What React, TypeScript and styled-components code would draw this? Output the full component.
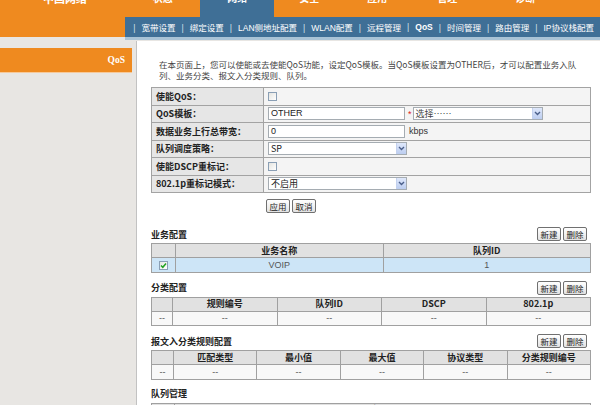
import styled, { createGlobalStyle } from "styled-components";

const ORANGE = "#ef8a1f";
const BLUE = "#3f6f96";
const CELL_BORDER = "#a3a3a3";

const GlobalStyle = createGlobalStyle`
  html, body {
    margin: 0;
    padding: 0;
  }
  body {
    background: #e8e6e3;
    font-family: "Liberation Sans", "Noto Sans CJK SC", sans-serif;
    font-size: 9px;
    color: #333;
  }
`;

const Header = styled.div`
  display: flex;
  align-items: flex-start;
`;

const Brand = styled.div`
  width: 138px;
  height: 37px;
  background: ${ORANGE};
  overflow: hidden;
`;

const BrandText = styled.div`
  margin: -8px 0 0 43px;
  font-family: "Noto Sans CJK SC", sans-serif;
  font-size: 11px;
  font-weight: 700;
  line-height: 12px;
  color: #fff;
`;

const HeaderRight = styled.div`
  flex: 1;
  display: flex;
  flex-direction: column;
`;

const Tabs = styled.div`
  display: flex;
  height: 17px;
  background: ${ORANGE};
`;

const Tab = styled.div<{ $w: number; $active?: boolean }>`
  width: ${(p) => p.$w}px;
  height: 17px;
  overflow: hidden;
  display: flex;
  justify-content: center;
  background: ${(p) => (p.$active ? BLUE : "transparent")};
`;

const TabLabel = styled.span`
  margin-top: -8px;
  font-family: "Noto Sans CJK SC", sans-serif;
  font-size: 10px;
  font-weight: 700;
  line-height: 12px;
  color: #fff;
`;

const SubNav = styled.div`
  display: flex;
  align-items: center;
  height: 20px;
  padding-left: 8px;
  background: ${BLUE};
  border-bottom: 3px solid #a9c3d6;
  white-space: nowrap;
  overflow: hidden;
  font-size: 8.5px;
  color: #fff;
`;

const Sep = styled.span`
  color: #d4e0ea;
`;

const NavItem = styled.span<{ $active?: boolean }>`
  padding: 0 6px;
  font-weight: ${(p) => (p.$active ? 700 : 400)};
`;

const Body = styled.div`
  display: flex;
  align-items: stretch;
`;

const Sidebar = styled.div`
  width: 132px;
  padding-top: 8px;
  flex-shrink: 0;
`;

const SideItem = styled.div`
  height: 24px;
  line-height: 24px;
  padding-right: 7px;
  text-align: right;
  background: ${ORANGE};
  border-bottom: 1px solid #f7c999;
  font-family: "Liberation Serif", serif;
  font-size: 9.5px;
  font-weight: 700;
  color: #fff;
`;

const Main = styled.div`
  flex: 1;
  margin: 1px 0 0 4px;
  padding: 18px 9px 20px 14px;
  background: #fff;
  border-left: 1px solid #c2c2c2;
`;

const Intro = styled.p`
  margin: 0 0 7px;
  padding-left: 8px;
  font-family: "Noto Sans CJK SC", sans-serif;
  font-size: 8.5px;
  line-height: 10.5px;
  color: #444;
  white-space: nowrap;
`;

const FormTable = styled.table`
  width: 100%;
  border-collapse: collapse;
  table-layout: fixed;

  tr {
    height: 17.5px;
  }
  td {
    border: 1px solid ${CELL_BORDER};
    padding: 0 4px;
    white-space: nowrap;
  }
`;

const LabelCell = styled.td`
  width: 103px;
  background: #e6e6e6;
  font-family: "Noto Sans CJK SC", sans-serif;
  font-weight: 700;
  color: #222;
`;

const ValueCell = styled.td`
  background: #f4f4f4;
`;

const Field = styled.div`
  display: flex;
  align-items: center;
`;

const TextInput = styled.div<{ $w: number }>`
  width: ${(p) => p.$w}px;
  height: 13px;
  box-sizing: border-box;
  border: 1px solid #a5acb2;
  background: #fff;
  padding-left: 2px;
  line-height: 11px;
  color: #222;
`;

const SelectBox = styled.div<{ $w: number }>`
  display: flex;
  align-items: center;
  justify-content: space-between;
  width: ${(p) => p.$w}px;
  height: 13px;
  box-sizing: border-box;
  border: 1px solid #a5acb2;
  background: #fff;
  padding-left: 2px;
  line-height: 11px;
  font-family: "Noto Sans CJK SC", "Liberation Sans", sans-serif;
  color: #222;
`;

const Placeholder = styled.span`
  color: #444;
`;

const Arrow = styled.span`
  display: flex;
  align-items: center;
  justify-content: center;
  width: 9px;
  height: 11px;
  background: linear-gradient(#dfe8fb, #bccdf0);
  border-left: 1px solid #c3d1ee;
`;

const Asterisk = styled.span`
  margin: 0 1px 0 3px;
  color: #e02020;
`;

const Unit = styled.span`
  margin-left: 4px;
  color: #333;
`;

const Check = styled.span`
  display: inline-flex;
  align-items: center;
  justify-content: center;
  width: 9px;
  height: 9px;
  box-sizing: border-box;
  border: 1px solid #8a9fb5;
  background: linear-gradient(135deg, #e4e4e0, #fff);
  vertical-align: middle;
`;

const ApplyRow = styled.div`
  display: flex;
  gap: 2px;
  margin-top: 6px;
  padding-left: 115px;
`;

const SmallButton = styled.button`
  width: 24px;
  height: 14px;
  padding: 0;
  border: 1px solid #707070;
  border-radius: 2px;
  background: linear-gradient(#ffffff, #e2e2e2);
  font-family: "Noto Sans CJK SC", sans-serif;
  font-size: 8.5px;
  line-height: 12px;
  color: #222;
`;

const SectionHead = styled.div<{ $top: number }>`
  display: flex;
  align-items: center;
  justify-content: space-between;
  height: 14px;
  margin: ${(p) => p.$top}px 0 2px;
  padding-right: 4px;
`;

const SectionTitle = styled.span`
  font-family: "Noto Sans CJK SC", sans-serif;
  font-weight: 700;
  color: #222;
`;

const ButtonGroup = styled.div`
  display: flex;
  gap: 2px;
`;

const GridTable = styled.table`
  width: 100%;
  border-collapse: collapse;
  table-layout: fixed;

  th,
  td {
    border: 1px solid #a0a0a0;
    padding: 0;
    text-align: center;
    white-space: nowrap;
    overflow: hidden;
    line-height: 12px;
  }
  th {
    height: 13px;
    background: #e1e1e1;
    font-family: "Noto Sans CJK SC", "Liberation Sans", sans-serif;
    font-weight: 700;
    color: #222;
  }
  td {
    height: 13.5px;
    background: #f8f8f8;
    color: #555;
  }
`;

const DataRow = styled.tr<{ $selected?: boolean }>`
  td {
    background: ${(p) => (p.$selected ? "#cde5f7" : "#f8f8f8")};
  }
`;

const Chevron = () => (
  <svg width="7" height="5" viewBox="0 0 7 5">
    <path d="M1 1 L3.5 3.5 L6 1" fill="none" stroke="#4a5f8a" strokeWidth="1.4" />
  </svg>
);

const Select = ({ w, children }: { w: number; children: React.ReactNode }) => (
  <SelectBox $w={w}>
    {children}
    <Arrow>
      <Chevron />
    </Arrow>
  </SelectBox>
);

const CheckBox = ({ checked }: { checked?: boolean }) => (
  <Check>
    {checked && (
      <svg width="7" height="7" viewBox="0 0 7 7">
        <path d="M1 3.5 L2.8 5.3 L6 1.5" fill="none" stroke="#21a121" strokeWidth="1.5" />
      </svg>
    )}
  </Check>
);

const topTabs = [
  { label: "状态", w: 75 },
  { label: "网络", w: 74, active: true },
  { label: "安全", w: 70 },
  { label: "应用", w: 66 },
  { label: "管理", w: 74 },
  { label: "诊断", w: 82 },
];

const subNav = [
  "宽带设置",
  "绑定设置",
  "LAN侧地址配置",
  "WLAN配置",
  "远程管理",
  "QoS",
  "时间管理",
  "路由管理",
  "IP协议栈配置",
];

type Section = {
  title: string;
  top: number;
  buttons: boolean;
  first: number;
  headers: string[];
  rows: { cells: string[]; checked?: boolean; selected?: boolean }[];
};

const sections: Section[] = [
  {
    title: "业务配置",
    top: 14,
    buttons: true,
    first: 24,
    headers: ["业务名称", "队列ID"],
    rows: [{ cells: ["VOIP", "1"], checked: true, selected: true }],
  },
  {
    title: "分类配置",
    top: 8,
    buttons: true,
    first: 21,
    headers: ["规则编号", "队列ID", "DSCP", "802.1p"],
    rows: [{ cells: ["--", "--", "--", "--"] }],
  },
  {
    title: "报文入分类规则配置",
    top: 8,
    buttons: true,
    first: 22,
    headers: ["匹配类型", "最小值", "最大值", "协议类型", "分类规则编号"],
    rows: [{ cells: ["--", "--", "--", "--", "--"] }],
  },
  {
    title: "队列管理",
    top: 7,
    buttons: false,
    first: 23,
    headers: ["队列ID"],
    rows: [{ cells: ["--"] }],
  },
];

export default function App() {
  return (
    <>
      <GlobalStyle />
      <Header>
        <Brand>
          <BrandText>中国网络</BrandText>
        </Brand>
        <HeaderRight>
          <Tabs>
            {topTabs.map((t) => (
              <Tab key={t.label} $w={t.w} $active={t.active}>
                <TabLabel>{t.label}</TabLabel>
              </Tab>
            ))}
          </Tabs>
          <SubNav>
            {subNav.map((s) => (
              <span key={s}>
                <Sep>|</Sep>
                <NavItem $active={s === "QoS"}>{s}</NavItem>
              </span>
            ))}
          </SubNav>
        </HeaderRight>
      </Header>

      <Body>
        <Sidebar>
          <SideItem>QoS</SideItem>
        </Sidebar>
        <Main>
          <Intro>
            在本页面上，您可以使能或去使能QoS功能，设定QoS模板。当QoS模板设置为OTHER后，才可以配置业务入队
            <br />
            列、业务分类、报文入分类规则、队列。
          </Intro>

          <FormTable>
            <tbody>
              <tr>
                <LabelCell>使能QoS：</LabelCell>
                <ValueCell>
                  <CheckBox />
                </ValueCell>
              </tr>
              <tr>
                <LabelCell>QoS模板：</LabelCell>
                <ValueCell>
                  <Field>
                    <TextInput $w={137}>OTHER</TextInput>
                    <Asterisk>*</Asterisk>
                    <Select w={130}>
                      <Placeholder>选择……</Placeholder>
                    </Select>
                  </Field>
                </ValueCell>
              </tr>
              <tr>
                <LabelCell>数据业务上行总带宽：</LabelCell>
                <ValueCell>
                  <Field>
                    <TextInput $w={137}>0</TextInput>
                    <Unit>kbps</Unit>
                  </Field>
                </ValueCell>
              </tr>
              <tr>
                <LabelCell>队列调度策略：</LabelCell>
                <ValueCell>
                  <Select w={139}>SP</Select>
                </ValueCell>
              </tr>
              <tr>
                <LabelCell>使能DSCP重标记：</LabelCell>
                <ValueCell>
                  <CheckBox />
                </ValueCell>
              </tr>
              <tr>
                <LabelCell>802.1p重标记模式：</LabelCell>
                <ValueCell>
                  <Select w={139}>不启用</Select>
                </ValueCell>
              </tr>
            </tbody>
          </FormTable>

          <ApplyRow>
            <SmallButton>应用</SmallButton>
            <SmallButton>取消</SmallButton>
          </ApplyRow>

          {sections.map((sec) => (
            <div key={sec.title}>
              <SectionHead $top={sec.top}>
                <SectionTitle>{sec.title}</SectionTitle>
                {sec.buttons && (
                  <ButtonGroup>
                    <SmallButton>新建</SmallButton>
                    <SmallButton>删除</SmallButton>
                  </ButtonGroup>
                )}
              </SectionHead>
              <GridTable>
                <colgroup>
                  <col style={{ width: sec.first }} />
                  {sec.headers.map((h) => (
                    <col key={h} />
                  ))}
                </colgroup>
                <thead>
                  <tr>
                    <th />
                    {sec.headers.map((h) => (
                      <th key={h}>{h}</th>
                    ))}
                  </tr>
                </thead>
                <tbody>
                  {sec.rows.map((r, i) => (
                    <DataRow key={i} $selected={r.selected}>
                      <td>{r.checked ? <CheckBox checked /> : "--"}</td>
                      {r.cells.map((c, j) => (
                        <td key={j}>{c}</td>
                      ))}
                    </DataRow>
                  ))}
                </tbody>
              </GridTable>
            </div>
          ))}
        </Main>
      </Body>
    </>
  );
}
